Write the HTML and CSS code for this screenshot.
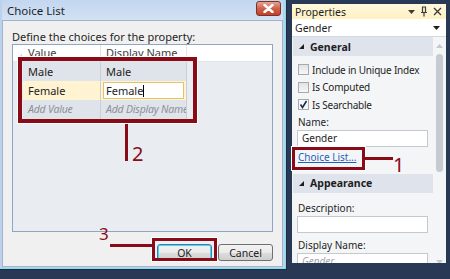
FILE: index.html
```html
<!DOCTYPE html>
<html lang="en">

<head>
    <meta charset="UTF-8">
    <title>Choice List</title>
    <link rel="stylesheet" href="styles.css">
</head>

<body>
    <div class="screen">
        <div class="dialog">
            <div class="dialog-title">
                <span>Choice List</span>
                <span class="close-btn">
                    <svg width="11" height="9" viewBox="0 0 11 9"><path d="M1.5 1 L9.5 8 M9.5 1 L1.5 8" stroke="#fff" stroke-width="2.4" stroke-linecap="round"/></svg>
                </span>
            </div>
            <div class="dialog-body">
                <div class="prompt">Define the choices for the property:</div>
                <div class="grid">
                    <div class="grid-row head">
                        <div class="rh"><svg width="5" height="5" viewBox="0 0 5 5"><path d="M5 0 L5 5 L0 5 Z" fill="#c6cad1"/></svg></div>
                        <div class="cell">Value</div>
                        <div class="cell">Display Name</div>
                        <div class="cell last"></div>
                    </div>
                    <div class="grid-row sel">
                        <div class="rh"></div>
                        <div class="cell">Male</div>
                        <div class="cell">Male</div>
                        <div class="cell last"></div>
                    </div>
                    <div class="grid-row edit">
                        <div class="rh"></div>
                        <div class="cell">Female</div>
                        <div class="cell"><span class="editor">Female<span class="caret"></span></span></div>
                        <div class="cell last"></div>
                    </div>
                    <div class="grid-row add">
                        <div class="rh"></div>
                        <div class="cell">Add Value</div>
                        <div class="cell">Add Display Name</div>
                        <div class="cell last"></div>
                    </div>
                </div>
                <div class="buttons">
                    <button class="btn default">OK</button>
                    <button class="btn">Cancel</button>
                </div>
            </div>
        </div>

        <div class="props">
            <div class="props-title">
                <span>Properties</span>
                <span class="title-icons">
                    <svg width="7" height="4" viewBox="0 0 7 4"><path d="M0 0 L7 0 L3.5 4 Z" fill="#3a3a3a"/></svg>
                    <svg width="8" height="11" viewBox="0 0 8 11"><path d="M2.5 1 V6 M5.5 1 V6 M1 6.5 H7 M4 6.5 V10.5 M2 1 H6" stroke="#3a3a3a" stroke-width="1.2" fill="none"/></svg>
                    <svg width="9" height="9" viewBox="0 0 9 9"><path d="M1 1 L8 8 M8 1 L1 8" stroke="#3a3a3a" stroke-width="1.3"/></svg>
                </span>
            </div>
            <div class="props-combo">
                <span>Gender</span>
                <svg width="7" height="4" viewBox="0 0 7 4"><path d="M0 0 L7 0 L3.5 4 Z" fill="#1e1e1e"/></svg>
            </div>
            <div class="props-main">
                <div class="props-list">
                    <div class="section">
                        <svg width="5" height="5" viewBox="0 0 5 5"><path d="M5 0 L5 5 L0 5 Z" fill="#1e1e1e"/></svg>
                        <span>General</span>
                    </div>
                    <div class="check-row"><span class="check"></span>Include in Unique Index</div>
                    <div class="check-row"><span class="check"></span>Is Computed</div>
                    <div class="check-row"><span class="check checked"><svg width="9" height="9" viewBox="0 0 9 9"><path d="M1.5 4.5 L3.5 7.5 L7.5 1" stroke="#1c2b4a" stroke-width="1.6" fill="none"/></svg></span>Is Searchable</div>
                    <div class="field-label">Name:</div>
                    <div class="textbox">Gender</div>
                    <a class="link" href="#">Choice List...</a>
                    <div class="section">
                        <svg width="5" height="5" viewBox="0 0 5 5"><path d="M5 0 L5 5 L0 5 Z" fill="#1e1e1e"/></svg>
                        <span>Appearance</span>
                    </div>
                    <div class="field-label">Description:</div>
                    <div class="textbox"></div>
                    <div class="field-label">Display Name:</div>
                    <div class="textbox placeholder">Gender</div>
                </div>
                <div class="scrollbar">
                    <svg width="7" height="4" viewBox="0 0 7 4"><path d="M0 4 L7 4 L3.5 0 Z" fill="#c4c8ce"/></svg>
                    <div class="thumb"></div>
                    <svg class="down" width="7" height="4" viewBox="0 0 7 4"><path d="M0 0 L7 0 L3.5 4 Z" fill="#c4c8ce"/></svg>
                </div>
            </div>
        </div>
    </div>

    <!-- annotation callouts drawn over the screenshot -->
    <div class="mark box-grid"></div>
    <div class="mark line-grid"></div>
    <div class="mark-num num-2">2</div>

    <div class="mark box-link"></div>
    <div class="mark line-link"></div>
    <div class="mark-num num-1">1</div>

    <div class="mark box-ok"></div>
    <div class="mark line-ok"></div>
    <div class="mark-num num-3">3</div>
</body>

</html>
```

FILE: styles.css
```css
body {
    margin: 0;
    width: 450px;
    height: 279px;
    background: #293955;
    font-family: "Noto Sans", "Open Sans", sans-serif;
    font-size: 11px;
    color: #1e1e1e;
    position: relative;
    overflow: hidden;
}

.screen {
    display: flex;
    align-items: flex-start;
}

/* dialog window */

.dialog {
    width: 287px;
    height: 270px;
    box-sizing: border-box;
    background: #bcd2ec;
    border-right: 1px solid #1d2a40;
    border-bottom: 1px solid #1d2a40;
    box-shadow: inset -1px -1px 0 #7fe0f0;
    padding: 0 3px 2px 2px;
    display: flex;
    flex-direction: column;
}

.dialog-title {
    height: 20px;
    flex: none;
    display: flex;
    align-items: center;
    justify-content: space-between;
    padding: 0 2px 0 5px;
    font-size: 11.5px;
    color: #1e1e1e;
    background: linear-gradient(#c2d6ef, #d3e2f4);
}

.close-btn {
    width: 23px;
    height: 13px;
    margin-top: -3px;
    display: flex;
    align-items: center;
    justify-content: center;
    border: 1px solid #7a3226;
    border-radius: 3px;
    background: linear-gradient(#e9a594, #d0604b 50%, #c0412d);
}

.dialog-body {
    flex: 1;
    background: #f0f0f0;
    border: 1px solid #a2b5cc;
    padding: 8px 9px 0 9px;
    display: flex;
    flex-direction: column;
}

.prompt {
    height: 15px;
    line-height: 15px;
}

.grid {
    height: 188px;
    box-sizing: border-box;
    border: 1px solid #8ea5c3;
    background: #e9ecf0;
}

.grid-row {
    display: grid;
    grid-template-columns: 10px 78px 86px 1fr;
    height: 19px;
    line-height: 19px;
}

.grid-row.head {
    height: 16px;
    line-height: 16px;
    background: #fff;
    color: #3c3c3c;
    border-bottom: 1px solid #e2e5ea;
}

.grid-row.head .cell {
    border-right-color: #e1e4e9;
}

.grid-row.sel .cell,
.grid-row.add .cell {
    background: #dfe3ea;
}

.grid-row.edit .cell {
    background: #fff3d2;
}

.grid-row .cell.last {
    background: transparent;
    border-right: none;
}

.grid-row.head .cell.last {
    background: #fff;
}

.grid-row.add {
    color: #8d9096;
    font-style: italic;
    font-size: 10.5px;
    letter-spacing: -0.2px;
}

.rh {
    background: #e9ecf0;
    display: flex;
    align-items: flex-end;
    justify-content: flex-end;
    padding: 0 1px 2px 0;
}

.grid-row.head .rh {
    background: #fff;
}

.cell {
    padding-left: 5px;
    border-right: 1px solid #c9ced7;
    white-space: nowrap;
    overflow: hidden;
}

.editor {
    display: block;
    margin: 1px 2px 1px -3px;
    height: 15px;
    line-height: 15px;
    padding-left: 2px;
    background: #fff;
    border: 1px solid #e3c36a;
}

.caret {
    display: inline-block;
    width: 1px;
    height: 12px;
    background: #000;
    vertical-align: -2px;
}

.buttons {
    display: flex;
    justify-content: flex-end;
    gap: 6px;
    margin-top: 12px;
}

.btn {
    width: 55px;
    height: 17px;
    padding: 0;
    font-family: inherit;
    font-size: 10.5px;
    color: #1e1e1e;
    border: 1px solid #707070;
    border-radius: 3px;
    background: linear-gradient(#f2f2f2, #ebebeb 50%, #dddddd 51%, #cfcfcf);
}

.btn.default {
    border-color: #3c7fb1;
    box-shadow: inset 0 0 0 1px #48d4f0;
}

/* properties tool window */

.props {
    width: 154px;
    height: 259px;
    margin: 4px 0 0 5px;
    display: flex;
    flex-direction: column;
    background: #f4f5f7;
    overflow: hidden;
    font-size: 10px;
}

.props-title {
    height: 15px;
    flex: none;
    display: flex;
    align-items: center;
    justify-content: space-between;
    padding: 0 4px 0 3px;
    background: linear-gradient(#fff8dc, #fdf0c2);
    font-size: 10.5px;
}

.title-icons {
    display: flex;
    align-items: center;
    gap: 5px;
}

.props-combo {
    height: 17px;
    flex: none;
    display: flex;
    align-items: center;
    justify-content: space-between;
    padding: 0 6px 0 3px;
    background: #fff;
    border-bottom: 1px solid #d4d8df;
    font-size: 10.5px;
}

.props-main {
    flex: 1;
    display: flex;
}

.props-list {
    flex: 1;
    min-width: 0;
    display: flex;
    flex-direction: column;
    padding-left: 1px;
}

.section {
    height: 19px;
    flex: none;
    display: flex;
    align-items: center;
    gap: 6px;
    padding-left: 6px;
    background: #dfe3eb;
    font-weight: bold;
    font-size: 10.5px;
}

.section + .check-row {
    margin-top: 5px;
}

.check-row {
    height: 17.5px;
    flex: none;
    display: flex;
    align-items: center;
    gap: 3px;
    padding-left: 5px;
    white-space: nowrap;
    letter-spacing: -0.2px;
}

.check {
    width: 9px;
    height: 9px;
    flex: none;
    border: 1px solid #a7a9ad;
    background: linear-gradient(#e0e2e5, #f7f7f8);
    display: flex;
    align-items: center;
    justify-content: center;
}

.check.checked {
    background: #f4f6f8;
}

.field-label {
    height: 16px;
    flex: none;
    line-height: 16px;
    padding-left: 5px;
}

.section + .field-label {
    margin-top: 7px;
}

.textbox {
    height: 15px;
    flex: none;
    line-height: 15px;
    margin: 0 5px 0 4px;
    padding-left: 4px;
    background: #fff;
    border: 1px solid #c4c8cf;
}

.textbox.placeholder {
    color: #a2a5aa;
    font-style: italic;
}

.textbox + .field-label {
    margin-top: 4px;
}

.link {
    height: 21px;
    flex: none;
    line-height: 21px;
    padding-left: 5px;
    color: #1f5fbf;
    margin-bottom: 6px;
}

.scrollbar {
    width: 13px;
    flex: none;
    display: flex;
    flex-direction: column;
    align-items: center;
    padding-top: 7px;
    gap: 6px;
}

.thumb {
    width: 7px;
    height: 118px;
    border-radius: 4px;
    background: #c6cad1;
}

.scrollbar .down {
    margin-top: auto;
    margin-bottom: 6px;
}

/* annotations */

.mark {
    position: absolute;
    background: #8a0b18;
}

.box-grid,
.box-link,
.box-ok {
    background: none;
    border: 4px solid #8a0b18;
    box-shadow: 0 0 0 1px #fff;
}

.box-grid {
    left: 18px;
    top: 57px;
    width: 171px;
    height: 58px;
}

.line-grid {
    left: 125px;
    top: 124px;
    width: 3px;
    height: 37px;
}

.box-link {
    left: 292px;
    top: 147px;
    width: 67px;
    height: 17px;
    border-width: 3px;
}

.line-link {
    left: 365px;
    top: 157px;
    width: 28px;
    height: 3px;
}

.box-ok {
    left: 152px;
    top: 238px;
    width: 59px;
    height: 17px;
    border-width: 3px;
}

.line-ok {
    left: 110px;
    top: 244px;
    width: 42px;
    height: 3px;
}

.mark-num {
    position: absolute;
    color: #8a0b18;
    font-family: "Noto Sans", sans-serif;
    font-size: 20px;
    line-height: 20px;
}

.num-2 {
    left: 132px;
    top: 144px;
}

.num-1 {
    left: 393px;
    top: 155px;
}

.num-3 {
    left: 99px;
    top: 224px;
    font-size: 17px;
}
```
